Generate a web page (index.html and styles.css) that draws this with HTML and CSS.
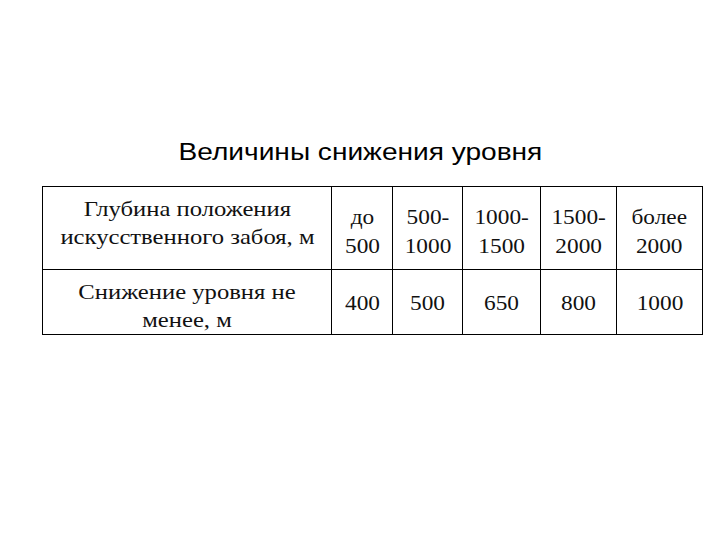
FILE: index.html
```html
<!DOCTYPE html>
<html lang="ru">
<head>
<meta charset="utf-8">
<link rel="stylesheet" href="styles.css">
</head>
<body>
<div class="slide">
  <h1 class="title"><span class="wide">Величины снижения уровня</span></h1>
  <table class="grid">
    <colgroup>
      <col class="c0"><col class="c1"><col class="c2"><col class="c3"><col class="c4"><col class="c5">
    </colgroup>
    <tr class="r1">
      <td class="label"><span class="lt">Глубина положения<br>искусственного забоя, м</span></td>
      <td class="num"><span class="nt">до<br>500</span></td>
      <td class="num"><span class="nt">500-<br>1000</span></td>
      <td class="num"><span class="nt">1000-<br>1500</span></td>
      <td class="num"><span class="nt">1500-<br>2000</span></td>
      <td class="num"><span class="nt">более<br>2000</span></td>
    </tr>
    <tr class="r2">
      <td class="label"><span class="lt">Снижение уровня не<br>менее, м</span></td>
      <td class="num"><span class="nt">400</span></td>
      <td class="num"><span class="nt">500</span></td>
      <td class="num"><span class="nt">650</span></td>
      <td class="num"><span class="nt">800</span></td>
      <td class="num"><span class="nt">1000</span></td>
    </tr>
  </table>
</div>
</body>
</html>
```
FILE: styles.css
```css
html, body {
  margin: 0;
  padding: 0;
  background: #fff;
}
.slide {
  width: 720px;
  height: 540px;
  padding-top: 138px;
  box-sizing: border-box;
}
.title {
  margin: 0 0 20px 0;
  font-family: "Liberation Sans", Arial, sans-serif;
  font-weight: normal;
  font-size: 24px;
  line-height: 28px;
  color: #000;
  text-align: center;
}
.wide {
  display: inline-block;
  transform: scaleX(1.17);
}
.grid {
  margin-left: 42px;
  width: 660px;
  border-collapse: collapse;
  table-layout: fixed;
  font-family: "Liberation Serif", "Times New Roman", serif;
  font-size: 22px;
  line-height: 29px;
  color: #111;
}
.c0 { width: 289px; }
.c1 { width: 61px; }
.c2 { width: 70px; }
.c3 { width: 78px; }
.c4 { width: 76px; }
.c5 { width: 86px; }
.grid td {
  border: 1px solid #000;
  padding: 0;
  text-align: center;
  vertical-align: middle;
}
.r1 { height: 83px; }
.r2 { height: 65px; }
.lt {
  display: inline-block;
  transform: scaleX(1.12);
  white-space: nowrap;
}
.nt {
  display: inline-block;
  transform: scaleX(1.06);
  white-space: nowrap;
}
.r1 td.num { padding-top: 5px; }
.r1 td.label { padding-bottom: 11px; line-height: 28px; }
.r2 td.label { padding-top: 7px; line-height: 27.5px; }
```
